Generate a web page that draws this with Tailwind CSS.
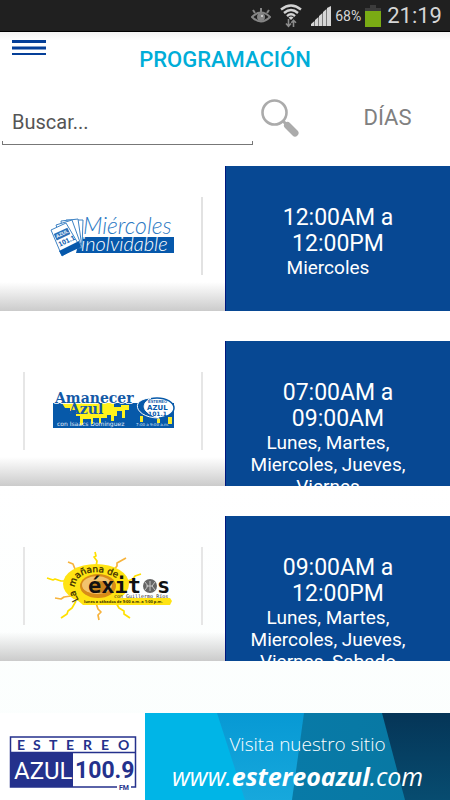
<!DOCTYPE html>
<html lang="es">
<head>
<meta charset="utf-8">
<meta name="viewport" content="width=device-width, initial-scale=1">
<title>Programación</title>
<script src="https://cdn.jsdelivr.net/npm/@tailwindcss/browser@4"></script>
</head>
<body class="flex min-h-screen flex-col bg-linear-to-b from-white from-60% to-[#fafefd] font-['Roboto',sans-serif]">

<!-- Status bar -->
<div class="flex h-8 items-center justify-end border-b border-black bg-[#202020] pr-2 text-[#d6d6d6]">
  <svg class="mr-2 h-4 w-5" viewBox="0 0 20 16" fill="none" stroke="#858585" stroke-width="2">
    <path d="M1 9Q10 0 19 9Q10 18 1 9Z"/><circle cx="10" cy="9" r="3" fill="#858585"/><circle cx="11" cy="8" r="1" fill="#ddd" stroke="none"/><path d="M10 4V0M4 5L2 2M16 5l2-3"/>
  </svg>
  <svg class="mr-2 h-6 w-6" viewBox="0 0 24 24" fill="none" stroke="#d2d2d2" stroke-width="2.4">
    <path d="M2 5.500Q12-2.500 22 5.500M5 9Q12 3 19 9M8 12.200Q12 8.500 16 12.200"/><path d="M9.500 13.500Q12 11.500 14.500 13.500L12 16Z" fill="#d2d2d2" stroke="none"/>
    <path d="M9.500 15v7M7 19.500l2.500 2.700 2.500-2.700M14.500 23v-6.500M12.300 18.800l2.200-2.500 2.500 2.500" stroke="#8b8b8b" stroke-width="1.600"/>
  </svg>
  <svg class="mr-1 h-5 w-5" viewBox="0 0 20 20" fill="#d6d6d6">
    <path d="M0 20v-2l3.500-3v5zM4 20v-6l3.500-3v9zM8 20V10l3.500-3v13zM12 20V6l3.500-3v17zM16 20V2l4-2v20z"/>
  </svg>
  <span class="mr-1 text-sm">68%</span>
  <svg class="mr-1.5 h-6 w-4" viewBox="0 0 16 24"><path d="M5 1h6v3h5v3H0V4h5z" fill="#3c3c3c"/><path d="M0 7h16v16H0z" fill="#7aab14"/></svg>
  <span class="text-[22px] leading-8">21:19</span>
</div>

<!-- Title bar -->
<header class="grid h-14 grid-cols-[1fr_auto_1fr] items-center bg-linear-to-b from-[#f3f3f3] to-white to-15% px-3">
  <button type="button" aria-label="Menú" class="flex w-9 flex-col self-start pt-2">
    <svg class="h-4 w-[34px]" viewBox="0 0 34 16"><path d="M0 0h34v3H0zM0 6.500h34v3H0zM0 13h34v2H0z" fill="#053f98"/></svg>
  </button>
  <h1 class="text-[22px] leading-7 font-medium text-[#00add8]">PROGRAMACIÓN</h1>
</header>

<!-- Search row -->
<form class="flex h-[78px] items-start pl-0.5">
  <div class="relative mt-2 w-[251px] shrink">
    <input id="buscar" type="text" aria-label="Buscar" placeholder="Buscar..." class="block h-[49px] w-full bg-transparent pt-2.5 pl-2.5 pb-2 text-xl leading-7 text-[#555] outline-none placeholder:text-[#555]">
    <span class="pointer-events-none absolute inset-x-0 bottom-0 h-1 border-x border-b border-[#777]"></span>
  </div>
  <button type="submit" aria-label="Buscar programa" class="mt-[10px] ml-2 shrink-0">
    <svg class="h-10 w-10" viewBox="0 0 40 40" fill="none" stroke="#ababab"><circle cx="13.500" cy="14.500" r="12" stroke-width="2.600"/><path d="M22 23l5 5" stroke-width="3"/><path d="M26.500 27.500l7.500 7.500" stroke-width="7" stroke-linecap="round"/></svg>
  </button>
  <button type="button" class="grow pt-4 pl-6 text-[22px] leading-7 text-[#808080]">DÍAS</button>
</form>

<!-- Programme list -->
<main class="flex flex-col gap-[30px]">
  <article class="grid h-[145px] grid-cols-2">
    <div class="flex items-start justify-center bg-linear-to-b from-transparent from-80% to-[#cbcbcb] pt-[31px]">
      <svg class="h-[78px] w-[180px]" viewBox="0 0 180 78" role="img" aria-label="Miércoles inolvidable">
        <path d="M179 0v78" stroke="#e2e2e2" stroke-width="2"/>
        <path d="M57 40h94v16H53z" fill="#0658ab"/>
        <g fill="#fff" stroke="#3f83c4" stroke-width="1">
          <path d="M43 23l17 0-1 28-17-1z"/><path d="M38 24l17-2 4 28-17 3z"/><path d="M33 28l16-5 9 25-16 6z"/><path d="M28 33l15-7 13 22-17 11z"/>
        </g>
        <path d="M36 54l20-10 2 6-19 9z" fill="#0658ab"/>
        <g transform="rotate(-25 41 40)"><path d="M33 33h15v7H33z" fill="#2c70b8"/><text x="34" y="38" font-size="5" font-weight="700" fill="#fff" font-family="Liberation Sans">AZUL</text><text x="33" y="47" font-size="7" font-weight="700" fill="#0658ab" font-family="Liberation Sans">101.1</text></g>
        <text x="60" y="37" font-size="23" font-style="italic" font-weight="300" fill="#2c79c3" font-family="Lato">Miércoles</text>
        <text x="58" y="54" font-size="20" font-style="italic" font-weight="300" fill="#fff" font-family="Lato">inolvidable</text>
      </svg>
    </div>
    <div class="overflow-hidden border-l border-[#00177e] bg-[#074893] pt-[39px] text-center text-white">
      <p class="text-[23px] leading-[26px]">12:00AM a<br>12:00PM</p>
      <p class="pr-5 text-[19px] leading-[22px]">Miercoles</p>
    </div>
  </article>

  <article class="grid h-[145px] grid-cols-2">
    <div class="flex items-start justify-center bg-linear-to-b from-transparent from-80% to-[#cbcbcb] pt-[31px]">
      <svg class="h-[78px] w-[180px]" viewBox="0 0 180 78" role="img" aria-label="Amanecer Azul con Isaacs Domínguez">
        <path d="M1 0v78M179 0v78" stroke="#dedede" stroke-width="1.500"/>
        <path d="M30 31h121v25H30z" fill="#0759a9"/>
        <path d="M39 31h52v4h7v-2h8v5h-4v8h-3v-7h-5v5h-3v5h-3v-6h-4v3h-6v5h-2v-5h-6v6h-2v-5h-8v6h-3v-9h-4v-5h-6v-3h-5z" fill="#fff21c"/>
        <path d="M117 44h3v6h-3zM134 46h3v5h-3zM145 45h4v7h-4z" fill="#f6e929"/>
        <ellipse cx="134" cy="36" rx="17" ry="10" fill="#fff" stroke="#0759a9" stroke-width="1.500"/>
        <path d="M128 26C106 27 112 46 136 46C119 41 117 32 128 26Z" fill="#0759a9" stroke="#fff" stroke-width="1"/>
        <text x="32" y="31" font-size="14" font-weight="700" fill="#1359a6" stroke="#fff" stroke-width="1.500" paint-order="stroke" font-family="DejaVu Serif">Amanecer</text>
        <text x="46" y="42" font-size="14" font-weight="700" fill="#1359a6" font-family="DejaVu Serif">Azul</text>
        <text x="34" y="54" font-size="6" fill="#e4eefa" font-family="DejaVu Sans">con  Isaacs Dominguez</text>
        <text x="113" y="54" font-size="4" fill="#d5e5f8" font-family="DejaVu Sans">7:00 a 9:00 a.m.</text>
        <text x="125" y="31" font-size="4" font-weight="700" fill="#0759a9" font-family="Liberation Sans">ESTEREO</text>
        <text x="124" y="38" font-size="7" font-weight="700" fill="#0759a9" font-family="DejaVu Sans">AZUL</text>
        <text x="125" y="44" font-size="6" font-weight="700" fill="#0759a9" font-family="DejaVu Sans">101.1</text>
      </svg>
    </div>
    <div class="overflow-hidden border-l border-[#00177e] bg-[#074893] pt-[39px] text-center text-white">
      <p class="text-[23px] leading-[26px]">07:00AM a<br>09:00AM</p>
      <p class="pr-5 text-[19px] leading-[22px]">Lunes, Martes,<br>Miercoles, Jueves,<br>Viernes</p>
    </div>
  </article>

  <article class="grid h-[145px] grid-cols-2">
    <div class="flex items-start justify-center bg-linear-to-b from-transparent from-80% to-[#cbcbcb] pt-[31px]">
      <svg class="h-[78px] w-[180px]" viewBox="0 0 180 78" role="img" aria-label="La mañana de éxitos con Guillermo Ríos">
        <path d="M1 0v78M179 0v78" stroke="#dedede" stroke-width="1.500"/>
        <g fill="none" stroke-width="1.700" stroke-linejoin="round" transform="translate(4 0)">
          <path d="M69 20l1-6-3-4 2-1-1-4M41 34l-7 0-6-2-2 1-6-2M49 54l-4 7-4 3-1 3-6 4M88 54l4 7 5 3 0 3 6 4M98 35l8-3 2-3 6-2" stroke="#ffe000"/>
          <path d="M52 27l-4-5-2-5-5-2M86 24l4-5 0-3 9-5M44 49l-7 1-3 2-6-1M69 56l2 6 3 3-3 3 1 5" stroke="#f7b33c"/>
        </g>
        <ellipse cx="73" cy="37" rx="33" ry="20" fill="#ffe313"/>
        <path d="M52 51h95l2 3-2 4H60z" fill="#ffe313"/>
        <ellipse cx="75" cy="39" rx="18" ry="12" fill="#d88c18"/>
        <ellipse cx="74" cy="38" rx="15" ry="9" fill="#f3c36e"/>
        <ellipse cx="76" cy="40" rx="9" ry="6" fill="#c8831d"/>
        <path id="arc" d="M56 53C46 37 55 25 74 25Q85 25 98 34" fill="none"/>
        <text font-size="9" fill="#392b00" stroke="#392b00" stroke-width=".3" font-family="DejaVu Sans"><textPath href="#arc">La mañana de</textPath></text>
        <text x="65" y="46" font-size="22" font-weight="700" fill="#111" font-family="DejaVu Sans Mono">éxit</text>
        <circle cx="127" cy="39" r="7" fill="#666"/><path d="M122 35l3 4-3 4m5-9v10m5-9l-3 4 3 4m-9-4h7" fill="none" stroke="#c5c5c5"/>
        <text x="134" y="46" font-size="22" font-weight="700" fill="#111" font-family="DejaVu Sans Mono">s</text>
        <text x="91" y="51" font-size="5" fill="#222" font-family="DejaVu Sans Mono">con Guillermo Ríos</text>
        <text x="61" y="56" font-size="4" font-weight="700" fill="#3b3100" font-family="Open Sans">lunes a sábados de 9:00 a.m. a 1:00 p.m.</text>
      </svg>
    </div>
    <div class="overflow-hidden border-l border-[#00177e] bg-[#074893] pt-[39px] text-center text-white">
      <p class="text-[23px] leading-[26px]">09:00AM a<br>12:00PM</p>
      <p class="pr-5 text-[19px] leading-[22px]">Lunes, Martes,<br>Miercoles, Jueves,<br>Viernes, Sabado</p>
    </div>
  </article>
</main>

<!-- Station banner -->
<a href="#" class="mt-auto flex h-[87px] bg-white">
  <svg class="mt-[22px] ml-2 h-14 w-[137px] shrink-0" viewBox="0 0 137 56" role="img" aria-label="Estereo Azul 100.9 FM">
    <path d="M2.500 2h125v50H2.500zM2.500 17.500h125" fill="#fff" stroke="#24318c" stroke-width="1.500"/>
    <path d="M3 18h62v34H3z" fill="#24318c"/>
    <path d="M109 49h14v7h-14z" fill="#fff"/>
    <text x="9 25 41 58 75 93 110" y="15" font-size="14" font-weight="700" fill="#24318c" font-family="Lato">ESTEREO</text>
    <text x="6" y="44" font-size="24" fill="#fff" font-family="Roboto">AZUL</text>
    <text x="67" y="43" font-size="23" font-weight="700" fill="#24318c" font-family="Roboto">100.9</text>
    <text x="111" y="55" font-size="7" font-weight="700" fill="#24318c" font-family="Roboto">FM</text>
  </svg>
  <div class="relative flex grow flex-col items-center overflow-hidden bg-[#00b5e7] pt-[17px] text-white">
    <svg class="absolute inset-0 h-full w-full" viewBox="0 0 305 87" preserveAspectRatio="none">
      <defs>
        <linearGradient id="sky" x1="0" y1="0" x2="0" y2="1"><stop stop-color="#0799d4"/><stop offset="1" stop-color="#17a8dc"/></linearGradient>
        <linearGradient id="teal" x1="0" y1="0" x2="1" y2="0"><stop stop-color="#087aa7"/><stop offset=".8" stop-color="#0878a3"/><stop offset="1" stop-color="#075f88"/></linearGradient>
        <linearGradient id="navy" x1="0" y1="0" x2="0" y2="1"><stop stop-color="#053557"/><stop offset="1" stop-color="#074c70"/></linearGradient>
      </defs>
      <path d="M72 0h233v87H100z" fill="url(#sky)"/>
      <path d="M159 0h146v87H147z" fill="url(#teal)"/>
      <path d="M237 0h68v87h-45z" fill="url(#navy)"/>
    </svg>
    <span class="relative pl-5 font-['Open_Sans',sans-serif] text-[19px] leading-7 font-light">Visita nuestro sitio</span>
    <span class="relative font-['Open_Sans',sans-serif] text-[25px] leading-9 whitespace-nowrap italic">www.<b>estereoazul</b>.com</span>
  </div>
</a>
</body>
</html>
